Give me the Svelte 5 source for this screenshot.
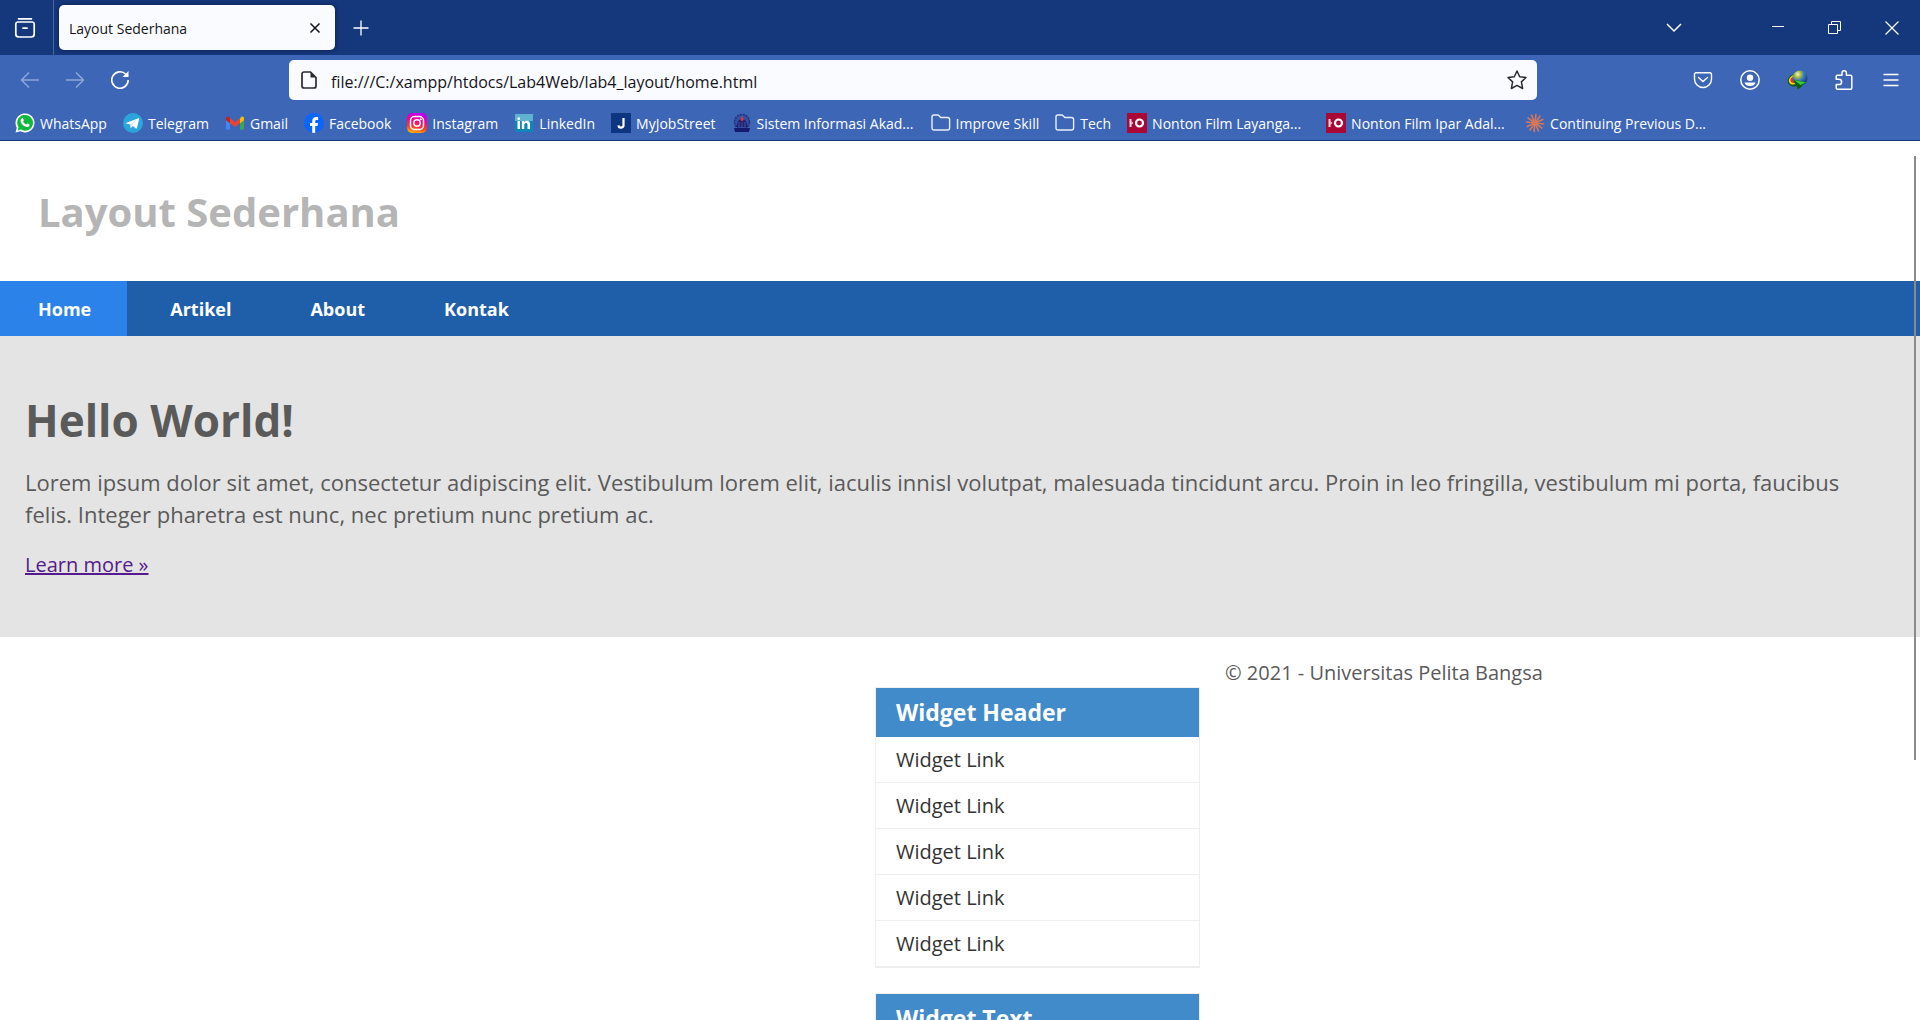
<script>
  const bookmarks = [
    { label: 'WhatsApp', icon: 'whatsapp' },
    { label: 'Telegram', icon: 'telegram' },
    { label: 'Gmail', icon: 'gmail' },
    { label: 'Facebook', icon: 'facebook' },
    { label: 'Instagram', icon: 'instagram' },
    { label: 'LinkedIn', icon: 'linkedin' },
    { label: 'MyJobStreet', icon: 'jobstreet' },
    { label: 'Sistem Informasi Akad...', icon: 'campus', long: true },
    { label: 'Improve Skill', icon: 'folder' },
    { label: 'Tech', icon: 'folder' },
    { label: 'Nonton Film Layanga...', icon: 'film', long: true },
    { label: 'Nonton Film Ipar Adal...', icon: 'film', long: true },
    { label: 'Continuing Previous D...', icon: 'burst', long: true },
  ];
  const menu = ['Home', 'Artikel', 'About', 'Kontak'];
  const links = [1, 2, 3, 4, 5];
  const rays = [0, 30, 60, 90, 120, 150, 180, 210, 240, 270, 300, 330];
</script>

{#snippet bookmarkIcon(name)}
  <svg class="ico" viewBox="0 0 20 20" aria-hidden="true">
    {#if name === 'whatsapp'}
      <path d="M0.5 19.5 1.8 14.7A9.5 9.5 0 1 1 5.4 18.2Z" fill="#fff" />
      <path d="M2.6 17.4 3.5 14.2A7.9 7.9 0 1 1 6 16.6Z" fill="#12b83d" />
      <path d="M7 5.2c.5-.3 1 0 1.200.5l.6 1.500c.1.4-.8 1.100-.7 1.400.6 1.300 1.700 2.300 3.100 2.900.4.1 1-1.100 1.400-.9l1.700.8c.5.3.1 1.500-.4 2-1 .9-2.600.8-4.800-.5C6.800 11.500 5.500 9.500 5.600 7.600 5.600 6.500 6.300 5.600 7 5.200Z" fill="#fff" />
    {:else if name === 'telegram'}
      <circle cx="10" cy="10" r="10" fill="#2ca5de" />
      <path d="M3 10 15.300 5.200c.6-.2.9.1.8.7L14 15c-.1.600-.7.700-1.100.4L9.800 13.100 8 14.700c-.3.3-.6.1-.6-.3V11.500L3.200 10.500C2.700 10.400 2.700 10.100 3 10Z" fill="#fff" />
      <path d="M7.500 11.500 13.300 7.300 8.600 12.200 8 14.600Z" fill="#c8daea" />
    {:else if name === 'gmail'}
      <path d="M1 5.500V15.500c0 .8.500 1.200 1.200 1.200H5V8.500Z" fill="#4285f4" />
      <path d="M19 5.500V15.500c0 .8-.5 1.200-1.200 1.200H15V8.500Z" fill="#34a853" />
      <path d="M15 5.200 16.200 4C17.400 3 19 3.800 19 5.400V7.200L15 10.200Z" fill="#fbbc04" />
      <path d="M5 10.200V5.200L10 9 15 5.200V10.200L10 14Z" fill="#ea4335" />
      <path d="M1 5.400C1 3.800 2.600 3 3.800 4L5 5.200V10.200L1 7.200Z" fill="#c5221f" />
    {:else if name === 'facebook'}
      <circle cx="10" cy="10" r="10" fill="#0866ff" />
      <path d="M8.200 19.800V13H6V10H8.200V8.500C8.200 5.300 9.700 4 12.300 4c.7 0 1.400.1 1.800.2V7H12.700c-1.100 0-1.500.5-1.500 1.500V10H14L13.500 13H11.200V19.900Z" fill="#fff" />
    {:else if name === 'instagram'}
      <defs>
        <linearGradient id="ig" x1="0.3" y1="1" x2="0.5" y2="0">
          <stop offset="0" stop-color="#ffb800" />
          <stop offset="0.3" stop-color="#ff3a2f" />
          <stop offset="0.6" stop-color="#ff0180" />
          <stop offset="1" stop-color="#b800f0" />
        </linearGradient>
      </defs>
      <rect width="20" height="20" rx="5" fill="url(#ig)" />
      <rect x="3.500" y="3.500" width="13" height="13" rx="4" fill="none" stroke="#fff" stroke-width="1.500" />
      <circle cx="10" cy="10" r="3.200" fill="none" stroke="#fff" stroke-width="1.500" />
      <circle cx="13.800" cy="6.200" r="1" fill="#fff" />
    {:else if name === 'linkedin'}
      <rect x="1" y="1" width="18" height="18" rx="1" fill="#0d86b8" />
      <rect x="1" y="1" width="18" height="7" fill="#5fb2d0" />
      <path d="M3.500 8H6V16H3.500ZM3.500 4.500H6V6.800H3.500ZM7.800 8H10.200V9.200C11.600 7.200 16 7.200 16 11V16H13.500V11.600C13.500 9.400 10.300 9.400 10.300 11.600V16H7.800Z" fill="#fff" />
    {:else if name === 'jobstreet'}
      <rect width="20" height="20" fill="#0e3580" />
      <path d="M12.500 5V11.800A2.300 2.300 0 0 1 7.500 12.300" fill="none" stroke="#fff" stroke-width="2.200" />
    {:else if name === 'campus'}
      <circle cx="10" cy="9" r="7.500" fill="#3450a2" stroke="#25307e" stroke-width="1.500" stroke-dasharray="2 1" />
      <path d="M4 14 6 8 8.500 6H11.500L14 8 16 14Z" fill="#20226f" />
      <path d="M2 15H18L17 19H3Z" fill="#151c70" />
      <path d="M10 2.500 11.800 6.500 10 8.500 8.300 6.500Z" fill="#d33a49" />
      <path d="M7 9V14M10 9V14M13 9V14" stroke="#4b62b5" stroke-width="0.800" />
    {:else if name === 'folder'}
      <path d="M1 14.800V4C1 2.800 1.800 2 3 2H6.500C7.200 2 7.700 2.300 8.100 2.700L9.800 4.500H16.500C17.800 4.500 18.600 5.300 18.600 6.500V14.800C18.600 16.200 17.800 17 16.500 17H3C1.800 17 1 16.200 1 14.800Z" fill="none" stroke="#e9effb" stroke-width="1.400" />
    {:else if name === 'film'}
      <rect width="20" height="20" fill="#a90736" />
      <path d="M3.500 6V14" stroke="#f3d8e0" stroke-width="2" />
      <path d="M4.400 8 6.200 10 4.400 12Z" fill="#f3d8e0" />
      <circle cx="12.500" cy="10" r="3.500" fill="none" stroke="#fff" stroke-width="2.200" />
    {:else}
      {#each rays as angle}
        <path d="M10 10V0.800" stroke="#d97757" stroke-width="1.600" transform="rotate({angle + 6} 10 10)" />
      {/each}
    {/if}
  </svg>
{/snippet}

<div class="browser">
  <header class="chrome">
    <div class="titlebar">
      <button class="view" aria-label="Recent browsing">
        <svg width="22" height="22" viewBox="0 0 22 22" fill="none" stroke="#fff" stroke-width="1.700" stroke-linecap="round">
          <path d="M4.500 1.800H17.500M3.500 5H18.500A2 2 0 0 1 20.200 7V17A3 3 0 0 1 17.200 20H4.800A3 3 0 0 1 1.800 17V7A2 2 0 0 1 3.500 5ZM9 11.200H13" />
        </svg>
      </button>
      <div class="tab">
        <span>Layout Sederhana</span>
        <button aria-label="Close tab">
          <svg width="12" height="12" viewBox="0 0 12 12" stroke="#15141a" stroke-width="1.500"><path d="M1.500 1.500 10.500 10.500M10.500 1.500 1.500 10.500" /></svg>
        </button>
      </div>
      <button class="new" aria-label="New tab">
        <svg width="16" height="16" viewBox="0 0 16 16" stroke="#fff" stroke-width="1.300"><path d="M8 0.500V15.500M0.500 8H15.500" /></svg>
      </button>
      <div class="window">
        <button aria-label="List all tabs">
          <svg width="18" height="12" viewBox="0 0 18 12" fill="none" stroke="#fff" stroke-width="1.500"><path d="M2 2 9 9 16 2" /></svg>
        </button>
        <button class="first" aria-label="Minimize">
          <svg width="12" height="13" viewBox="0 0 12 13" stroke="#fff"><path d="M0 5.500H12" /></svg>
        </button>
        <button aria-label="Restore">
          <svg width="13" height="13" viewBox="0 0 13 13" fill="none" stroke="#fff"><path d="M0.500 3.500H9.500V12.500H0.500ZM3.500 3.500V0.500H12.500V9.500H9.500" /></svg>
        </button>
        <button aria-label="Close window">
          <svg width="14" height="14" viewBox="0 0 14 14" stroke="#fff" stroke-width="1.200"><path d="M0.500 0.500 13.500 13.500M13.500 0.500 0.500 13.500" /></svg>
        </button>
      </div>
    </div>

    <div class="toolbar">
      <div class="history">
        <button aria-label="Back" disabled>
          <svg width="20" height="18" viewBox="0 0 20 18" fill="none" stroke="#8fa6d8" stroke-width="1.500"><path d="M19 9H1.500M9 1.500 1.500 9 9 16.500" /></svg>
        </button>
        <button aria-label="Forward" disabled>
          <svg width="20" height="18" viewBox="0 0 20 18" fill="none" stroke="#8fa6d8" stroke-width="1.500"><path d="M1 9H18.500M11 1.500 18.500 9 11 16.500" /></svg>
        </button>
        <button aria-label="Reload">
          <svg width="20" height="20" viewBox="0 0 20 20" fill="none" stroke="#fff" stroke-width="1.600"><path d="M18.200 10A8.200 8.200 0 1 1 15.800 4.200L17 5.500" /><path d="M18.500 1V7H12.500Z" fill="#fff" stroke="none" /></svg>
        </button>
      </div>
      <div class="address">
        <svg width="16" height="18" viewBox="0 0 16 18" fill="none" stroke="#2b2a33" stroke-width="1.700" aria-hidden="true">
          <path d="M3 1H9.500L15 6.500V15A2 2 0 0 1 13 17H3A2 2 0 0 1 1 15V3A2 2 0 0 1 3 1Z" /><path d="M9.500 1V6.500H15Z" fill="#2b2a33" stroke="none" />
        </svg>
        <input aria-label="Address" value="file:///C:/xampp/htdocs/Lab4Web/lab4_layout/home.html" />
        <button aria-label="Bookmark this page">
          <svg width="20" height="20" viewBox="0 0 20 20" fill="none" stroke="#2b2a33" stroke-width="1.500" stroke-linejoin="round"><path d="M10 1 12.700 6.700 19 7.500 14.400 11.900 15.600 18.500 10 15.400 4.400 18.500 5.600 11.900 1 7.500 7.300 6.700Z" /></svg>
        </button>
      </div>
      <div class="actions">
        <button aria-label="Save to Pocket">
          <svg width="20" height="20" viewBox="0 0 20 20" fill="none" stroke="#fff" stroke-width="1.400" stroke-linecap="round"><path d="M3 2.700H17A1.500 1.500 0 0 1 18.500 4.200V9A8.500 8.500 0 0 1 1.500 9V4.200A1.500 1.500 0 0 1 3 2.700ZM5.500 7.500 10 11.500 14.500 7.500" /></svg>
        </button>
        <button aria-label="Account">
          <svg width="20" height="20" viewBox="0 0 20 20"><circle cx="10" cy="10" r="9.200" fill="none" stroke="#fff" stroke-width="1.500" /><circle cx="10" cy="7.800" r="3.200" fill="#fff" /><path d="M4.500 12.500H15.500C14.800 17.300 5.200 17.300 4.500 12.500Z" fill="#fff" /></svg>
        </button>
        <button aria-label="Download manager">
          <svg width="22" height="20" viewBox="0 0 22 20">
            <defs><radialGradient id="globe" cx="0.350" cy="0.250" r="0.800"><stop offset="0" stop-color="#f1f3c0" /><stop offset="0.300" stop-color="#9db43c" /><stop offset="0.500" stop-color="#3e7fc4" /><stop offset="1" stop-color="#142c66" /></radialGradient></defs>
            <path d="M9 3.500C2 5.500 0 11 3 14.500 5 17 10 17 13 15.500L10 12Z" fill="#0f5a20" />
            <path d="M9 4.500C3 6.500 1.500 10.500 4 13.500 5.500 15 9 14.500 11 13.500L9 11Z" fill="#ffd91c" />
            <path d="M8.500 6C4.500 7.500 3.500 10 5 12 6.500 13.500 9 13 11 12Z" fill="#e9342a" />
            <circle cx="14" cy="8" r="7.500" fill="url(#globe)" />
            <path d="M7 9.500 20 12.500 16.500 13.500 15.500 17 11.500 19.500 11 16.500Z" fill="#0a5f14" />
            <path d="M8 10 20 12.500 14.500 15Z" fill="#2fd02f" />
          </svg>
        </button>
        <button aria-label="Extensions">
          <svg width="18" height="20" viewBox="0 0 18 20" fill="none" stroke="#fff" stroke-width="1.500" stroke-linejoin="round"><path d="M1.200 9.200V6.500A1.300 1.300 0 0 1 2.500 5.200H7V3A2.200 2.200 0 0 1 11.400 3V5.200H15.500A1.300 1.300 0 0 1 16.800 6.500V18A1.200 1.200 0 0 1 15.500 19.200H2.500A1.300 1.300 0 0 1 1.200 18V14.500H4A2.500 2.500 0 0 0 4 9.300Z" /></svg>
        </button>
        <button aria-label="Open application menu">
          <svg width="16" height="14" viewBox="0 0 16 14" stroke="#fff" stroke-width="1.300"><path d="M0.500 1.500H15.500M0.500 7H15.500M0.500 12.500H15.500" /></svg>
        </button>
      </div>
    </div>

    <nav class="bookmarks" aria-label="Bookmarks">
      {#each bookmarks as b}
        <a href="#bookmark" class:long={b.long}>{@render bookmarkIcon(b.icon)}<span>{b.label}</span></a>
      {/each}
    </nav>
  </header>

  <div class="page">
    <div class="brand"><h1>Layout Sederhana</h1></div>
    <nav class="menu" aria-label="Main">
      {#each menu as item, i}
        <a href="#page" class:active={i === 0}>{item}</a>
      {/each}
    </nav>
    <section class="hero">
      <h1>Hello World!</h1>
      <p>Lorem ipsum dolor sit amet, consectetur adipiscing elit. Vestibulum lorem elit, iaculis innisl volutpat, malesuada tincidunt arcu. Proin in leo fringilla, vestibulum mi porta, faucibus felis. Integer pharetra est nunc, nec pretium nunc pretium ac.</p>
      <a href="#more">Learn more »</a>
    </section>
    <div class="columns">
      <aside>
        <section class="widget">
          <h3>Widget Header</h3>
          <ul>
            {#each links as n (n)}
              <li><a href="#link">Widget Link</a></li>
            {/each}
          </ul>
        </section>
        <section class="widget">
          <h3>Widget Text</h3>
        </section>
      </aside>
      <footer><p>© 2021 - Universitas Pelita Bangsa</p></footer>
    </div>
    <div class="thumb"></div>
  </div>
</div>

<style>
  :global(body) {
    margin: 0;
    overflow: hidden;
  }
  .browser {
    display: flex;
    flex-direction: column;
    height: 100vh;
    font-family: 'Open Sans', 'Noto Sans', sans-serif;
  }
  svg {
    display: block;
    flex: none;
  }
  button {
    display: flex;
    align-items: center;
    justify-content: center;
    padding: 0;
    border: 0;
    background: none;
  }
  .chrome {
    flex: none;
    background: #3d66b6;
    border-bottom: 1px solid #15377c;
    color: #fff;
  }
  .titlebar {
    display: flex;
    align-items: center;
    height: 55px;
    background: #15377c;
  }
  .view {
    width: 54px;
    height: 55px;
    padding-right: 3px;
    border-right: 1px solid #4a659b;
  }
  .tab {
    display: flex;
    align-items: center;
    justify-content: space-between;
    box-sizing: border-box;
    width: 276px;
    height: 45px;
    margin-left: 5px;
    padding: 0 14px 0 10px;
    border-radius: 5px;
    background: #fafbff;
    box-shadow: 0 0 4px #0a1c44;
    color: #15141a;
    font-size: 14px;
  }
  .tab span,
  .bookmarks span {
    padding-top: 2px;
  }
  .new {
    width: 52px;
    height: 55px;
  }
  .window {
    display: flex;
    margin-left: auto;
  }
  .window button {
    width: 57px;
    height: 55px;
  }
  .window .first {
    margin-left: 47px;
  }
  .toolbar {
    display: flex;
    align-items: center;
    height: 50px;
  }
  .history {
    display: flex;
    align-items: center;
    width: 289px;
    padding-left: 7px;
    box-sizing: border-box;
  }
  .history button {
    width: 45px;
    height: 40px;
  }
  .address {
    display: flex;
    flex: 1;
    align-items: center;
    height: 40px;
    padding: 0 10px 0 12px;
    border-radius: 5px;
    background: #fafbff;
  }
  .address input {
    flex: 1;
    min-width: 0;
    margin-left: 14px;
    padding: 3px 0 0;
    border: 0;
    outline: 0;
    background: none;
    color: #15141a;
    font: 16px 'Open Sans', 'Noto Sans', sans-serif;
  }
  .actions {
    display: flex;
    justify-content: flex-end;
    gap: 2px;
    box-sizing: border-box;
    width: 383px;
    padding-right: 7px;
  }
  .actions button {
    width: 45px;
    height: 40px;
  }
  .bookmarks {
    display: flex;
    align-items: center;
    gap: 16px;
    height: 35px;
    padding: 0 15px;
    overflow: hidden;
  }
  .bookmarks a {
    display: flex;
    flex: none;
    align-items: center;
    gap: 5px;
    color: #fff;
    font-size: 14px;
    line-height: 20px;
    text-decoration: none;
    white-space: nowrap;
  }
  .bookmarks .long {
    width: 183px;
  }
  .ico {
    width: 20px;
    height: 20px;
  }

  .page {
    position: relative;
    flex: 1;
    min-height: 0;
    overflow: hidden;
    background: #fff;
    color: #5a5a5a;
    font-size: 20px;
    line-height: 25px;
  }
  .brand {
    padding: 43px 38px 42px;
  }
  .brand h1 {
    margin: 0;
    color: #b5b5b5;
    font-size: 40px;
    line-height: 55px;
  }
  .menu {
    display: flex;
    gap: 5px;
    background: #1f5faa;
  }
  .menu a {
    padding: 16px 36px 14px 38px;
    color: #fff;
    font-size: 18px;
    font-weight: 700;
    line-height: 25px;
    text-decoration: none;
  }
  .menu .active {
    background: #2b83ea;
  }
  .hero {
    padding: 61px 50px 60px 25px;
    background: #e4e4e4;
  }
  .hero h1 {
    margin: 0 0 23px;
    font-size: 44px;
    line-height: 46px;
  }
  .hero p {
    margin: 0 0 22px;
    font-size: 22px;
    line-height: 32px;
  }
  .hero a {
    color: #551a8b;
  }
  .columns {
    display: grid;
    grid-template-columns: 875fr 325fr 720fr;
    align-items: start;
  }
  aside {
    grid-column: 2;
    display: grid;
    gap: 25px;
    padding-top: 50px;
  }
  .widget {
    border: 1px solid #eee;
  }
  .widget h3 {
    margin: 0;
    padding: 12px 20px;
    background: #428bca;
    color: #fff;
    font-size: 23px;
    line-height: 25px;
  }
  .widget ul {
    margin: 0;
    padding: 0;
    list-style: none;
  }
  .widget li {
    padding: 10px 20px;
    border-bottom: 1px solid #eee;
  }
  .widget a {
    color: #333;
    text-decoration: none;
  }
  footer {
    padding: 23px 25px;
  }
  footer p {
    margin: 0;
  }
  .thumb {
    position: absolute;
    top: 15px;
    right: 4px;
    width: 2px;
    height: 604px;
    background: #8a8a8a;
  }
</style>
